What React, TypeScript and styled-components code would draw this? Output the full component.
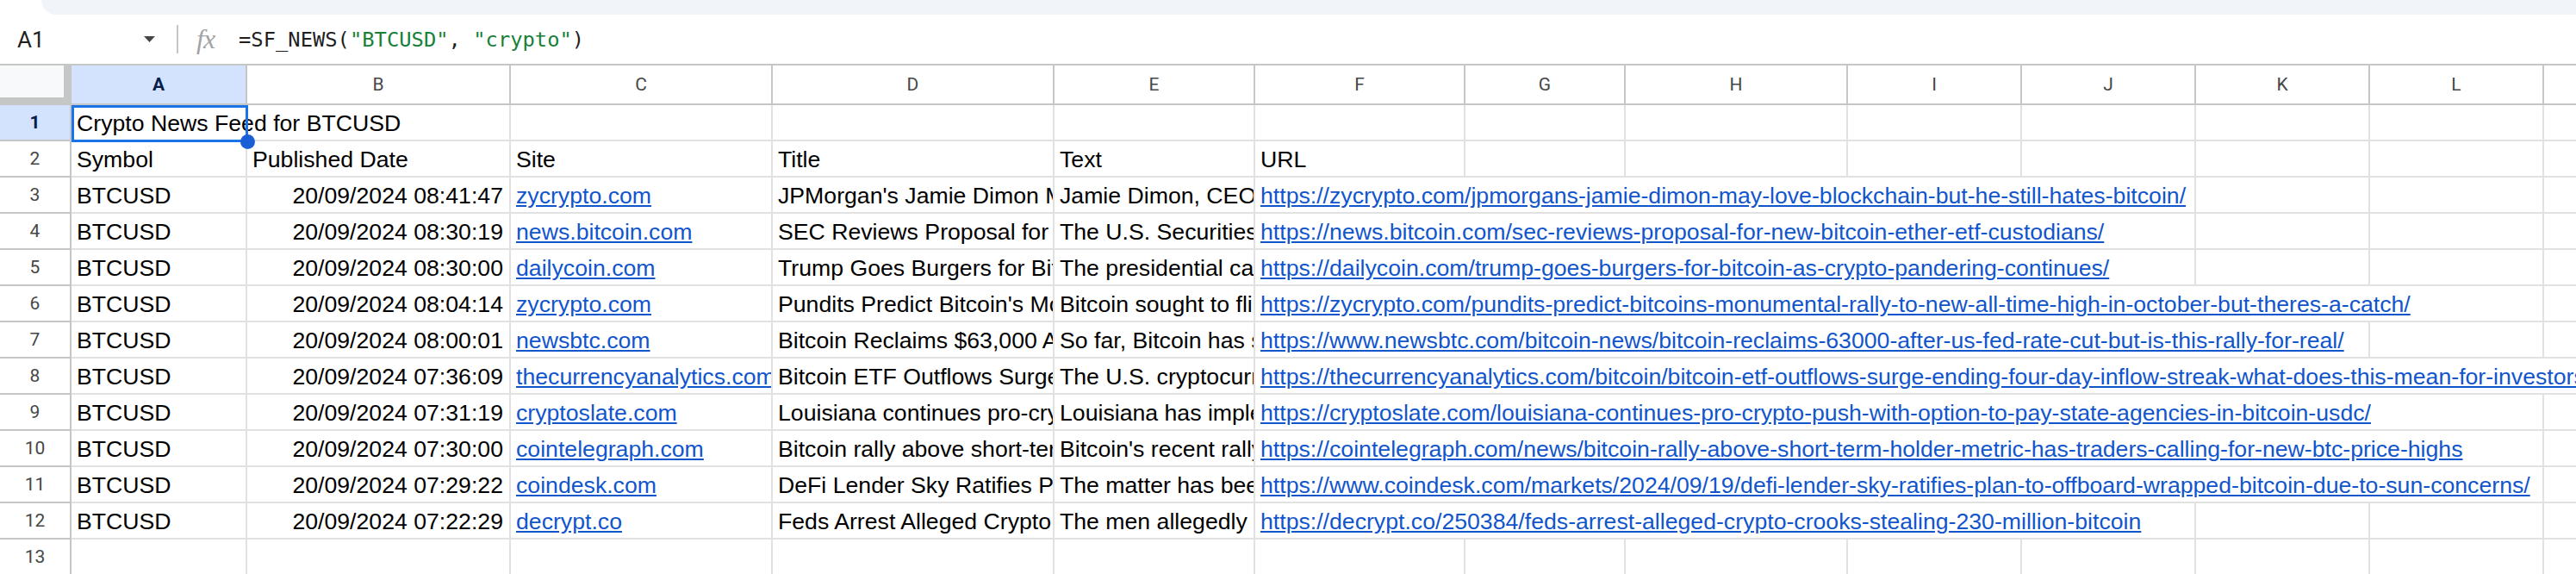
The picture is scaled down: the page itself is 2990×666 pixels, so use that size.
import React, { useMemo } from "react";
import styled, { createGlobalStyle, css } from "styled-components";

const GlobalStyle = createGlobalStyle`
  html, body {
    margin: 0;
    padding: 0;
    overflow: hidden;
    background: #ffffff;
  }
  body {
    font-family: "Liberation Sans", Arial, sans-serif;
  }
`;

type CellKind = "text" | "number" | "link";

interface CellValue {
  text: string;
  kind: CellKind;
}

const t = (text: string): CellValue => ({ text, kind: "text" });
const n = (text: string): CellValue => ({ text, kind: "number" });
const l = (text: string): CellValue => ({ text, kind: "link" });

const ROW_HEADER_WIDTH = 83;
const CELL_FONT_SIZE = 26.67;
const CELL_FONT = `${CELL_FONT_SIZE}px "Liberation Sans"`;
const CELL_PAD_LEFT = 6;

const columns = [
  { key: "A", width: 204 },
  { key: "B", width: 306 },
  { key: "C", width: 304 },
  { key: "D", width: 327 },
  { key: "E", width: 233 },
  { key: "F", width: 244 },
  { key: "G", width: 186 },
  { key: "H", width: 258 },
  { key: "I", width: 202 },
  { key: "J", width: 202 },
  { key: "K", width: 202 },
  { key: "L", width: 202 },
  { key: "M", width: 202 },
];

const formula = {
  cellRef: "A1",
  name: "=SF_NEWS(",
  arg1: '"BTCUSD"',
  sep: ", ",
  arg2: '"crypto"',
  close: ")",
};

const news = [
  {
    date: "20/09/2024 08:41:47",
    site: "zycrypto.com",
    title: "JPMorgan's Jamie Dimon May Love Blockchain But He Still Hates Bitcoin",
    text: "Jamie Dimon, CEO of JPMorgan Chase, has once again voiced his disdain for Bitcoin.",
    url: "https://zycrypto.com/jpmorgans-jamie-dimon-may-love-blockchain-but-he-still-hates-bitcoin/",
  },
  {
    date: "20/09/2024 08:30:19",
    site: "news.bitcoin.com",
    title: "SEC Reviews Proposal for New Bitcoin, Ether ETF Custodians",
    text: "The U.S. Securities and Exchange Commission is reviewing a proposal.",
    url: "https://news.bitcoin.com/sec-reviews-proposal-for-new-bitcoin-ether-etf-custodians/",
  },
  {
    date: "20/09/2024 08:30:00",
    site: "dailycoin.com",
    title: "Trump Goes Burgers for Bitcoin as Crypto Pandering Continues",
    text: "The presidential candidate paid for burgers with Bitcoin.",
    url: "https://dailycoin.com/trump-goes-burgers-for-bitcoin-as-crypto-pandering-continues/",
  },
  {
    date: "20/09/2024 08:04:14",
    site: "zycrypto.com",
    title: "Pundits Predict Bitcoin's Monumental Rally To New All-Time High In October",
    text: "Bitcoin sought to flip the $64,000 level into support.",
    url: "https://zycrypto.com/pundits-predict-bitcoins-monumental-rally-to-new-all-time-high-in-october-but-theres-a-catch/",
  },
  {
    date: "20/09/2024 08:00:01",
    site: "newsbtc.com",
    title: "Bitcoin Reclaims $63,000 After US Fed Rate Cut, But Is This Rally For Real?",
    text: "So far, Bitcoin has seen a strong recovery.",
    url: "https://www.newsbtc.com/bitcoin-news/bitcoin-reclaims-63000-after-us-fed-rate-cut-but-is-this-rally-for-real/",
  },
  {
    date: "20/09/2024 07:36:09",
    site: "thecurrencyanalytics.com",
    title: "Bitcoin ETF Outflows Surge, Ending Four-Day Inflow Streak",
    text: "The U.S. cryptocurrency ETF market saw outflows.",
    url: "https://thecurrencyanalytics.com/bitcoin/bitcoin-etf-outflows-surge-ending-four-day-inflow-streak-what-does-this-mean-for-investors",
  },
  {
    date: "20/09/2024 07:31:19",
    site: "cryptoslate.com",
    title: "Louisiana continues pro-crypto push with option to pay state agencies in Bitcoin, USDC",
    text: "Louisiana has implemented a new payment option.",
    url: "https://cryptoslate.com/louisiana-continues-pro-crypto-push-with-option-to-pay-state-agencies-in-bitcoin-usdc/",
  },
  {
    date: "20/09/2024 07:30:00",
    site: "cointelegraph.com",
    title: "Bitcoin rally above short-term holder metric has traders calling for new BTC price highs",
    text: "Bitcoin's recent rally above a key metric.",
    url: "https://cointelegraph.com/news/bitcoin-rally-above-short-term-holder-metric-has-traders-calling-for-new-btc-price-highs",
  },
  {
    date: "20/09/2024 07:29:22",
    site: "coindesk.com",
    title: "DeFi Lender Sky Ratifies Plan to Offboard Wrapped Bitcoin Due to Sun Concerns",
    text: "The matter has been discussed for weeks.",
    url: "https://www.coindesk.com/markets/2024/09/19/defi-lender-sky-ratifies-plan-to-offboard-wrapped-bitcoin-due-to-sun-concerns/",
  },
  {
    date: "20/09/2024 07:22:29",
    site: "decrypt.co",
    title: "Feds Arrest Alleged Crypto Crooks Stealing $230 Million in Bitcoin",
    text: "The men allegedly stole from a single victim.",
    url: "https://decrypt.co/250384/feds-arrest-alleged-crypto-crooks-stealing-230-million-bitcoin",
  },
];

const sheetRows: (CellValue | null)[][] = [
  [t("Crypto News Feed for BTCUSD")],
  [t("Symbol"), t("Published Date"), t("Site"), t("Title"), t("Text"), t("URL")],
  ...news.map((item) => [
    t("BTCUSD"),
    n(item.date),
    l(item.site),
    t(item.title),
    t(item.text),
    l(item.url),
  ]),
  [],
];

const TopStrip = styled.div`
  height: 17px;
  margin-left: 48px;
  background: #f1f4f9;
  border-bottom-left-radius: 20px;
`;

const FormulaBar = styled.div`
  display: flex;
  align-items: center;
  height: 59px;
  box-sizing: border-box;
  border-bottom: 2px solid #c4c7c5;
  background: #ffffff;
`;

const NameBox = styled.div`
  width: 205px;
  box-sizing: border-box;
  display: flex;
  align-items: center;
  justify-content: space-between;
  padding: 0 25px 0 20px;
  font-family: Roboto, "Liberation Sans", sans-serif;
  font-size: 26px;
  color: #1f1f1f;
`;

const Divider = styled.div`
  width: 2px;
  height: 33px;
  background: #c4c7c5;
`;

const FxLabel = styled.span`
  margin-left: 21px;
  width: 34px;
  font-family: "Liberation Serif", "DejaVu Serif", serif;
  font-style: italic;
  font-size: 32px;
  color: #a3a3a3;
  letter-spacing: -1px;
`;

const FormulaText = styled.div`
  margin-left: 15px;
  font-family: "DejaVu Sans Mono", "Liberation Mono", monospace;
  font-size: 23.8px;
  color: #1f1f1f;
  white-space: pre;
`;

const FormulaString = styled.span`
  color: #188038;
`;

const SheetArea = styled.div`
  position: relative;
  width: max-content;
`;

const Grid = styled.div`
  display: grid;
  grid-template-columns: ${ROW_HEADER_WIDTH}px ${columns.map((c) => `${c.width}px`).join(" ")};
  grid-template-rows: 46px;
  grid-auto-rows: 42px;
`;

const Corner = styled.div`
  box-sizing: border-box;
  background: #f8f9fa;
  border-right: 9px solid #c4c7c5;
  border-bottom: 9px solid #c4c7c5;
`;

const headerCell = css<{ $selected?: boolean }>`
  display: flex;
  align-items: center;
  justify-content: center;
  box-sizing: border-box;
  border-right: 2px solid #c4c7c5;
  border-bottom: 2px solid #c4c7c5;
  font-family: Roboto, "Liberation Sans", sans-serif;
  font-size: 21px;
  color: #444746;
  background: #ffffff;
  ${(p) =>
    p.$selected &&
    css`
      background: #d3e3fd;
      color: #041e49;
      font-weight: 700;
    `}
`;

const ColHeader = styled.div<{ $selected?: boolean }>`
  ${headerCell}
`;

const RowHeader = styled.div<{ $selected?: boolean }>`
  ${headerCell}
`;

const Cell = styled.div<{ $span: number; $kind?: CellKind }>`
  grid-column: span ${(p) => p.$span};
  box-sizing: border-box;
  border-right: 2px solid #e1e1e1;
  border-bottom: 2px solid #e1e1e1;
  padding: ${(p) => (p.$kind === "number" ? "0 7px 0 0" : `0 0 0 ${CELL_PAD_LEFT}px`)};
  text-align: ${(p) => (p.$kind === "number" ? "right" : "left")};
  font-size: ${CELL_FONT_SIZE}px;
  line-height: 42px;
  white-space: nowrap;
  overflow: hidden;
  color: #000000;
`;

const CellLink = styled.a`
  color: #1155cc;
  text-decoration: underline;
`;

const Selection = styled.div`
  position: absolute;
  left: ${ROW_HEADER_WIDTH}px;
  top: 46px;
  width: 205px;
  height: 43px;
  box-sizing: border-box;
  border: 3px solid #1a73e8;
  pointer-events: none;
`;

const FillHandle = styled.div`
  position: absolute;
  left: ${ROW_HEADER_WIDTH + 205 - 9}px;
  top: ${46 + 43 - 9}px;
  width: 17px;
  height: 17px;
  border-radius: 50%;
  background: #1a5fd6;
`;

let measureCtx: CanvasRenderingContext2D | null = null;

function measureText(text: string) {
  if (!measureCtx) {
    measureCtx = document.createElement("canvas").getContext("2d");
  }
  if (!measureCtx) return text.length * CELL_FONT_SIZE * 0.5;
  measureCtx.font = CELL_FONT;
  return measureCtx.measureText(text).width;
}

// left aligned text runs into the empty cells to its right, like in Sheets
function layoutRow(values: (CellValue | null)[]) {
  const cells: { value: CellValue | null; span: number }[] = [];
  let i = 0;
  while (i < columns.length) {
    const value = values[i] ?? null;
    let span = 1;
    if (value && value.kind !== "number") {
      const needed = measureText(value.text) + CELL_PAD_LEFT + 2;
      let width = columns[i].width;
      while (width < needed && i + span < columns.length && !values[i + span]) {
        width += columns[i + span].width;
        span++;
      }
    }
    cells.push({ value, span });
    i += span;
  }
  return cells;
}

const App = () => {
  const rows = useMemo(() => sheetRows.map(layoutRow), []);

  return (
    <>
      <GlobalStyle />
      <TopStrip />
      <FormulaBar>
        <NameBox>
          <span>{formula.cellRef}</span>
          <svg width="13" height="7" viewBox="0 0 13 7">
            <path d="M0 0h13L6.5 7z" fill="#444746" />
          </svg>
        </NameBox>
        <Divider />
        <FxLabel>fx</FxLabel>
        <FormulaText>
          {formula.name}
          <FormulaString>{formula.arg1}</FormulaString>
          {formula.sep}
          <FormulaString>{formula.arg2}</FormulaString>
          {formula.close}
        </FormulaText>
      </FormulaBar>

      <SheetArea>
        <Grid>
          <Corner />
          {columns.map((col) => (
            <ColHeader key={col.key} $selected={col.key === "A"}>
              {col.key}
            </ColHeader>
          ))}

          {rows.map((cells, rowIndex) => (
            <React.Fragment key={rowIndex}>
              <RowHeader $selected={rowIndex === 0}>{rowIndex + 1}</RowHeader>
              {cells.map((cell, cellIndex) => (
                <Cell key={cellIndex} $span={cell.span} $kind={cell.value?.kind}>
                  {cell.value?.kind === "link" ? (
                    <CellLink href={cell.value.text}>{cell.value.text}</CellLink>
                  ) : (
                    cell.value?.text
                  )}
                </Cell>
              ))}
            </React.Fragment>
          ))}
        </Grid>
        <Selection />
        <FillHandle />
      </SheetArea>
    </>
  );
};

export default App;
